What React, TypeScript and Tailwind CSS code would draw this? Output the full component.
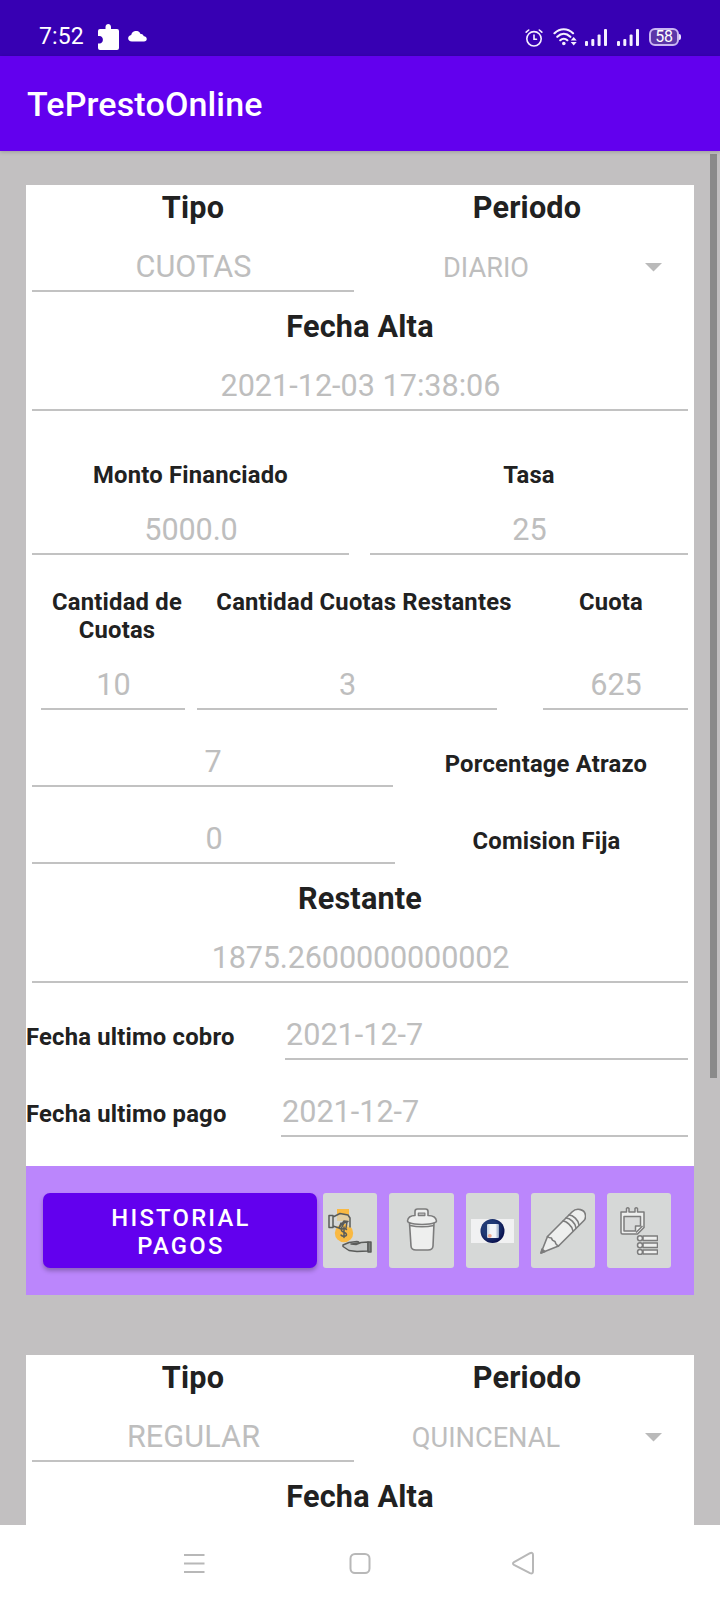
import type { ReactNode } from "react";
import clsx from "clsx";

function Heading({ children }: { children: ReactNode }) {
  return (
    <div className="h-[45px] text-center text-[30.6px] leading-[45px] font-bold tracking-[0.2px] text-[#212121]">
      {children}
    </div>
  );
}

function Label({ children, className }: { children: ReactNode; className?: string }) {
  return (
    <div className={clsx("text-[23.8px] leading-[28px] font-bold tracking-[0.2px] text-[#212121]", className)}>
      {children}
    </div>
  );
}

function Field({ value, className }: { value: string; className?: string }) {
  return (
    <div
      className={clsx(
        "h-[62px] shrink-0 border-b-2 border-[#c2c2c2] pt-[17px] pl-px text-[30.6px] leading-[40px] text-[#bebebe]",
        className,
      )}
    >
      {value}
    </div>
  );
}

function Top({ tipo, periodo }: { tipo: string; periodo: string }) {
  return (
    <div className="grid grid-cols-2">
      <div>
        <Heading>Tipo</Heading>
        <Field value={tipo} className="mx-[6px] text-center tracking-[0.1px]" />
      </div>
      <div>
        <Heading>Periodo</Heading>
        <div className="flex h-[62px] pt-[18px] text-[27.2px] leading-[40px] text-[#bebebe]">
          <span className="w-[252px] text-center">{periodo}</span>
          <svg className="mt-[15px] ml-[33px] h-[9px] w-[18px]" viewBox="0 0 18 9">
            <path d="M0 0h17L8.500 8.500z" fill="#bababa" />
          </svg>
        </div>
      </div>
    </div>
  );
}

const tile = "flex h-[75px] items-center justify-center rounded-[3px] bg-[#d6d8d7]";

function PayIcon() {
  return (
    <svg width="44" height="44" viewBox="0 0 44 44" fill="none">
      <path d="M9 0h12v12H9z" fill="#f9b943" />
      <circle cx="16" cy="24" r="9.2" fill="#f9b943" />
      <path d="M5 7.500 12 4.500l9 1.500 1.500 4v9l-3-1-1-4-3 1-1 6-3-2 1-5-7.500 4z" fill="#d6d8d7" fillOpacity=".65" />
      <g stroke="#5a5c5a" strokeWidth="1.500" strokeLinejoin="round" strokeLinecap="round">
        <path d="M1 6.500h4v12H1zM5 8l7-3.500 8 1.500 2 3v9M5 17l6 2 5-7 4 .5M13 14l-2 5 2 1 3-6 3-1-1 6" />
        <path d="M18.500 20.500c-1-1.500-4.500-1.500-5 .5-.5 2.500 5 2 5 4.500 0 2-4 2.500-5.500.5M16 18v10.500" />
        <path d="m15 36 6-2.500 8-1c3 0 2 2-1 2l-5 .5 5 .5 5-2 7-.5v9l-11 .5-8-1-6-4z" fill="#c7cac9" />
        <path d="M40 33h3v10h-3z" fill="#777b7a" />
      </g>
    </svg>
  );
}

function TrashIcon() {
  return (
    <svg className="-mt-px" width="32" height="44" viewBox="0 0 32 44" fill="#eeefee" stroke="#7c7c7c" strokeWidth="1.600" strokeLinejoin="round">
      <path d="m3.500 15 1.500 23c.2 3 2.500 4 5 4h12c2.500 0 4.800-1 5-4l1-23z" />
      <path d="M1.500 13C2 9 5 7.500 9 7.500V3.500C9 1.800 9.800 1 11.500 1h8C21.200 1 22 1.800 22 3.500V7.500c5 0 8 1.500 8.500 5.500 0 1-1 1.500-2 1.800C23 17 9 17 3.500 14.800c-1-.3-2-.8-2-1.800z" />
      <path d="M12.300 5h6.600v2.600h-6.600z" fill="#b5b5b5" strokeWidth="1.200" />
      <path d="M4 17.500c7 1.500 17 1.500 24 0" fill="none" />
    </svg>
  );
}

function BookIcon() {
  return (
    <svg width="43" height="24" viewBox="0 0 43 24">
      <defs>
        <radialGradient id="disc" cx=".4" cy=".4" r=".65">
          <stop offset=".5" stopColor="#203a75" />
          <stop offset="1" stopColor="#060b49" />
        </radialGradient>
        <linearGradient id="sheet">
          <stop offset="0" stopColor="#c3d2e0" />
          <stop offset=".3" stopColor="#f3f6f9" />
          <stop offset=".7" stopColor="#f3f6f9" />
          <stop offset="1" stopColor="#8ea3c1" />
        </linearGradient>
      </defs>
      <path d="M0 0h43v24H0z" fill="#f1f1f2" />
      <circle cx="21.500" cy="12" r="12" fill="url(#disc)" />
      <rect x="16" y="5" width="12" height="14" rx="1" fill="url(#sheet)" />
      <circle cx="18.800" cy="16.800" r="1.900" fill="#f0ab90" />
    </svg>
  );
}

function PencilIcon() {
  return (
    <svg width="46" height="46" viewBox="0 0 46 46" fill="#eeefee" stroke="#7c7c7c" strokeWidth="1.600" strokeLinejoin="round" strokeLinecap="round">
      <path d="M1 45 7.500 28.500 32 4c5-5 13-2.500 13.500 3.500.3 2-.5 4-2 5.500L18.500 38z" />
      <path d="M7.500 28.500c1 1 2 1.500 4 1.500.3 2 1.500 3 3.500 3.500.3 2 1.500 3.500 3.500 4.500M23 13c3 0 9.500 5 10 10M26 10c4 0 9.500 5 10 10M29 7c4 0 9.500 5 10 10" fill="none" />
      <path d="m1 45 1-4 3 2.500z" fill="#7c7c7c" />
    </svg>
  );
}

function NotesIcon() {
  return (
    <svg width="38" height="48" viewBox="0 0 38 48" fill="#eeefee" stroke="#7c7c7c" strokeWidth="1.500" strokeLinejoin="round">
      <path d="M1 5h5.500V1.500Q7.800 0 9 1.500V5h6V1.500Q16.200 0 17.500 1.500V5H24v15.500L17.500 27H2.500Q1 27 1 25.500z" />
      <path d="M4 9.500h16.500v9.500h-5v5H4z" fill="#d9dada" />
      <path d="m16 25.500 6.500-6.500" fill="none" />
      <path d="M23 29h14.500v4.500H23zM23 36h14.500v4.500H23zM23 43h14.500v4H23z" />
      <circle cx="20" cy="31.200" r="2.500" />
      <circle cx="20" cy="38.200" r="2.500" />
      <circle cx="20" cy="45" r="2.500" />
    </svg>
  );
}

function SignalBars() {
  return (
    <svg width="22" height="17" viewBox="0 0 22 17" fill="#f4efff">
      <rect x="0" y="12" width="3" height="5" rx="1" />
      <rect x="6.300" y="10" width="3" height="7" rx="1" />
      <rect x="12.600" y="5.500" width="3" height="11.500" rx="1" />
      <rect x="19" y="0" width="3" height="17" rx="1" />
    </svg>
  );
}

function StatusBar() {
  return (
    <div className="flex h-[56px] items-start bg-[#3700b3] pl-[39px] text-white">
      <span className="mt-[23px] w-[46px] text-[23px] leading-[28px] tracking-[0.1px] whitespace-nowrap">7:52</span>
      <svg className="mt-[24px] ml-[13px]" width="21" height="26" viewBox="0 0 21 26" fill="#fff">
        <path d="M2 5h5.500V3c0-4 5.500-4 5.500 0v2h6q2 0 2 2v17q0 2-2 2H2q-2 0-2-2v-4.500h1.500c4.500 0 4.500-7.500 0-7.500H0V7q0-2 2-2z" />
      </svg>
      <svg className="mt-[31px] ml-[9px]" width="19" height="11" viewBox="0 0 19 11" fill="#fff">
        <path d="M4 10.500C-1 10.500-1 4.500 3.200 4 4-1 11-1.500 12.500 3c2-.3 3 .8 3 2 4.500.5 4 5.500.5 5.500z" />
      </svg>
      <svg className="mt-[29px] ml-[378px]" width="18" height="18" viewBox="0 0 18 18" fill="none" stroke="#f4efff" strokeWidth="1.600" strokeLinecap="round">
        <circle cx="9" cy="9.800" r="7.200" />
        <path d="M1.200 3.200 3.700 1M16.800 3.200 14.300 1M9 6v4.200h2.500" />
      </svg>
      <svg className="mt-[28px] ml-[10px]" width="24" height="18" viewBox="0 0 24 18" fill="none" stroke="#f4efff" strokeWidth="2.200" strokeLinecap="round">
        <path d="M1.500 5.200C7-.1 14.500-.1 20 5.200M4.300 8.800c4-3.800 9-3.800 13 0M7.300 12.200c2-1.800 5-1.800 7 0" />
        <circle cx="10.800" cy="15.500" r="1.800" fill="#f4efff" stroke="none" />
        <path d="m17.700 12.500 3-3.500 3 3.500zM17.700 14l3 3.500 3-3.500z" fill="#f4efff" stroke="none" />
      </svg>
      <div className="mt-[29px] ml-[8px] flex gap-[10px]">
        <SignalBars />
        <SignalBars />
      </div>
      <div className="relative mt-[28px] ml-[10px] flex h-[18px] w-[30px] items-center justify-center rounded-[6px] border-2 border-[#c9b5f2] bg-[#5b36a8] text-[16px] leading-none tracking-[-0.3px]">
        58
        <span className="absolute top-[4px] -right-[4px] h-[6px] w-[2px] rounded-r bg-[#e9e0ff]" />
      </div>
    </div>
  );
}

function LoanCard() {
  return (
    <section className="h-[1110px] bg-white">
      <Top tipo="CUOTAS" periodo="DIARIO" />
      <div className="mt-[12px]">
        <Heading>Fecha Alta</Heading>
        <Field value="2021-12-03 17:38:06" className="mx-[6px] text-center" />
      </div>

      <div className="mt-[50px] flex gap-[21px] px-[6px] text-center">
        <div className="w-[317px]">
          <Label className="h-[32px]">Monto Financiado</Label>
          <Field value="5000.0" className="tracking-[-0.1px]" />
        </div>
        <div className="w-[318px]">
          <Label className="h-[32px]">Tasa</Label>
          <Field value="25" />
        </div>
      </div>

      <div className="mt-[33px] flex h-[60px] text-center">
        <Label className="ml-[16px] w-[150px]">Cantidad de Cuotas</Label>
        <Label className="ml-[6px] w-[332px]">Cantidad Cuotas Restantes</Label>
        <Label className="ml-[6px] w-[150px]">Cuota</Label>
      </div>
      <div className="flex pl-[15px] text-center">
        <Field value="10" className="w-[144px]" />
        <Field value="3" className="ml-[12px] w-[300px]" />
        <Field value="625" className="ml-[46px] w-[145px]" />
      </div>

      <div className="mt-[15px] flex pl-[6px] text-center">
        <Field value="7" className="w-[361px]" />
        <Label className="flex-1 pt-[25px] pl-[5px]">Porcentage Atrazo</Label>
      </div>
      <div className="mt-[15px] flex pl-[6px] text-center">
        <Field value="0" className="w-[363px]" />
        <Label className="flex-1 pt-[25px] pl-[4px]">Comision Fija</Label>
      </div>

      <div className="mt-[12px]">
        <Heading>Restante</Heading>
        <Field value="1875.2600000000002" className="mx-[6px] text-center tracking-[-0.15px]" />
      </div>

      <div className="mt-[15px] flex pr-[6px]">
        <Label className="w-[259px] pt-[25px]">Fecha ultimo cobro</Label>
        <Field value="2021-12-7" className="flex-1" />
      </div>
      <div className="mt-[15px] flex pr-[6px]">
        <Label className="w-[255px] pt-[25px]">Fecha ultimo pago</Label>
        <Field value="2021-12-7" className="flex-1" />
      </div>

      <div className="mt-[29px] flex h-[129px] bg-[#bb86fc] pt-[27px] pl-[17px]">
        <button className="h-[75px] w-[274px] rounded-[7px] bg-[#6200ee] pt-[2px] pr-[48px] pl-[50px] text-[23.8px] leading-[28px] font-medium tracking-[2.25px] text-white shadow-[0_3px_4px_rgba(0,0,0,0.25)]">
          HISTORIAL PAGOS
        </button>
        <button className={clsx(tile, "ml-[6px] w-[54px]")}>
          <PayIcon />
        </button>
        <button className={clsx(tile, "ml-[12px] w-[65px]")}>
          <TrashIcon />
        </button>
        <button className={clsx(tile, "ml-[12px] w-[53px]")}>
          <BookIcon />
        </button>
        <button className={clsx(tile, "ml-[12px] w-[64px]")}>
          <PencilIcon />
        </button>
        <button className={clsx(tile, "ml-[12px] w-[64px]")}>
          <NotesIcon />
        </button>
      </div>
    </section>
  );
}

export default function App() {
  return (
    <div className="flex h-[1600px] w-[720px] flex-col overflow-hidden bg-white font-['Roboto',sans-serif]">
      <StatusBar />
      <header className="z-10 flex h-[95px] items-center bg-[#6200ee] pt-[2px] pl-[27px] text-[34px] font-medium tracking-[0.15px] text-white shadow-[0_1px_4px_rgba(0,0,0,0.2)]">
        TePrestoOnline
      </header>
      <main className="relative h-[1374px] overflow-hidden bg-[#c2c0c1] px-[26px] pt-[34px]">
        <LoanCard />
        <section className="mt-[60px] h-[400px] bg-white">
          <Top tipo="REGULAR" periodo="QUINCENAL" />
          <div className="mt-[12px]">
            <Heading>Fecha Alta</Heading>
          </div>
        </section>
        <div className="absolute top-[3px] right-[3px] h-[924px] w-[7px] bg-[#8a8a8a]" />
      </main>
      <nav className="flex h-[75px] items-center bg-white">
        <svg width="720" height="75" viewBox="0 0 720 75" fill="none" stroke="#b8b8b8" strokeWidth="2" strokeLinejoin="round">
          <path d="M184 30h20.500M184 38.500h20.500M184 47h20.500" />
          <rect x="350.500" y="29" width="19" height="19" rx="4.500" />
          <path d="M514 37.200 530 28.200Q533 27 533 30V46Q533 49.500 530 48.200L514 39.800Q512 38.500 514 37.200z" />
        </svg>
      </nav>
    </div>
  );
}
